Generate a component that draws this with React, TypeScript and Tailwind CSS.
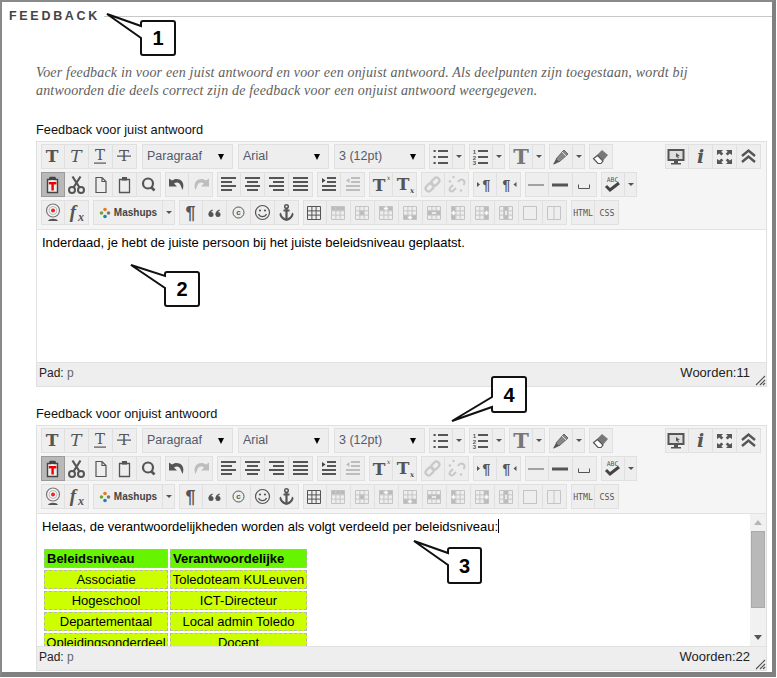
import React from "react";

const C = "#555";
const L = "#bdbdbd";

function Ico({ children }: { children: React.ReactNode }) {
  return (
    <svg width="24" height="25" viewBox="0 0 24 25" className="block shrink-0">
      {children}
    </svg>
  );
}

function SerifT({ x = 11, y = 18, s = 17, it = false, w = "700", c = C }: { x?: number; y?: number; s?: number; it?: boolean; w?: string; c?: string }) {
  return (
    <text x={x} y={y} textAnchor="middle" fontFamily="'DejaVu Serif', serif" fontWeight={w} fontStyle={it ? "italic" : "normal"} fontSize={s} fill={c}>
      T
    </text>
  );
}

const lines = (rows: [number, number][], sw = 2, c = C, start = 5) =>
  rows.map(([x1, x2], i) => <rect key={i} x={x1} y={start + i * 4} width={x2 - x1} height={sw} fill={c} />);

const TableIco = ({ fill = [], first = false, extra }: { fill?: number[]; first?: boolean; extra?: React.ReactNode }) => {
  const c = first ? "#555" : "#c4c4c4";
  const cells = [0, 1, 2, 3, 4, 5, 6, 7, 8];
  return (
    <Ico>
      {cells.map((i) =>
        fill.includes(i) ? <rect key={i} x={4 + (i % 3) * 4.5} y={6 + Math.floor(i / 3) * 4.5} width="4.5" height="4.5" fill="#bbb" /> : null
      )}
      <path d="M4.5 6.5h13v13h-13zM8.9 6.5v13M13.1 6.5v13M4.5 10.9h13M4.5 15.1h13" fill="none" stroke={c} strokeWidth="1" />
      {extra}
    </Ico>
  );
};

const plus = (x: number, y: number) => <path d={`M${x - 2} ${y}h4M${x} ${y - 2}v4`} stroke="#fff" strokeWidth="1.4" />;

const Icons: Record<string, React.ReactNode> = {
  bold: <Ico><SerifT /></Ico>,
  italic: <Ico><SerifT it w="400" /></Ico>,
  underline: <Ico><SerifT y={16} s={15} w="400" /><rect x="5" y="18.5" width="12" height="1.2" fill={C} /></Ico>,
  strike: <Ico><SerifT y={17} s={15} w="400" /><rect x="4" y="11.5" width="14" height="1.2" fill={C} /></Ico>,
  pasteWord: (
    <Ico>
      <path d="M6.5 7.5h3v-2h4v2h3v13h-10z" fill="#eee" stroke="#444" strokeWidth="1.4" />
      <rect x="8" y="5.5" width="7" height="2.5" fill="#444" />
      <rect x="7.8" y="10" width="7.6" height="2.4" fill="#e00" />
      <rect x="10.4" y="10" width="2.4" height="8.5" fill="#e00" />
    </Ico>
  ),
  cut: (
    <Ico>
      <circle cx="7" cy="18" r="3" fill="none" stroke={C} strokeWidth="2" />
      <circle cx="16" cy="18" r="3" fill="none" stroke={C} strokeWidth="2" />
      <path d="M8.5 15.5L15.5 4.5M14.5 15.5L7.5 4.5" stroke={C} strokeWidth="2.2" />
    </Ico>
  ),
  doc: <Ico><path d="M7 5.5h6l4 4v11H7z M13 5.5v4h4" fill="none" stroke={C} strokeWidth="1.2" /></Ico>,
  paste: (
    <Ico>
      <path d="M6.5 7.5h10v13h-10z" fill="none" stroke={C} strokeWidth="1.3" />
      <rect x="9" y="5" width="5" height="3.5" fill={C} />
    </Ico>
  ),
  search: (
    <Ico>
      <circle cx="11" cy="11.5" r="5" fill="none" stroke={C} strokeWidth="2.2" />
      <path d="M14 15l3.5 3.5" stroke={C} strokeWidth="2.6" />
    </Ico>
  ),
  undo: <Ico><path d="M4 6.5v8h8l-3-3c3-2 6-1 7 3l1.5 3.5c2-5 .5-9-3-10.500-3-1-5.500-.5-7.500 1z" fill={C} /></Ico>,
  redo: <Ico><path d="M20 6.500v8h-8l3-3c-3-2-6-1-7 3l-1.500 3.500c-2-5-.5-9 3-10.500 3-1 5.500-.5 7.500 1z" fill={L} /></Ico>,
  al: <Ico>{lines([[4, 19], [4, 15], [4, 19], [4, 15]])}</Ico>,
  ac: <Ico>{lines([[4, 19], [6, 17], [4, 19], [6, 17]])}</Ico>,
  ar: <Ico>{lines([[4, 19], [8, 19], [4, 19], [8, 19]])}</Ico>,
  aj: <Ico>{lines([[4, 19], [4, 19], [4, 19], [4, 19]])}</Ico>,
  indent: (
    <Ico>
      <path d="M5 6l3.500 2.500L5 11z" fill="#444" />
      {lines([[10, 19]], 2, C, 5)}
      <rect x="10" y="9" width="9" height="2" fill={C} />
      <rect x="5" y="13" width="14" height="2" fill={C} />
      <rect x="5" y="17" width="14" height="2" fill={C} />
    </Ico>
  ),
  outdent: (
    <Ico>
      <path d="M8.500 6L5 8.500 8.500 11z" fill={L} />
      <rect x="10" y="5" width="9" height="2" fill={L} />
      <rect x="10" y="9" width="9" height="2" fill={L} />
      <rect x="5" y="13" width="14" height="2" fill={L} />
      <rect x="5" y="17" width="14" height="2" fill={L} />
    </Ico>
  ),
  sup: (
    <Ico>
      <SerifT x={10} y={18.500} s={17} />
      <text x="19.500" y="8" textAnchor="middle" fontFamily="'DejaVu Serif', serif" fontStyle="italic" fontSize="6.500" fill={C}>x</text>
    </Ico>
  ),
  sub: (
    <Ico>
      <SerifT x={10} y={18} s={17} />
      <text x="19" y="21" textAnchor="middle" fontFamily="'DejaVu Serif', serif" fontStyle="italic" fontWeight="700" fontSize="7" fill={C}>x</text>
    </Ico>
  ),
  link: (
    <Ico>
      <g fill="none" stroke="#c8c8c8" strokeWidth="2.2" transform="rotate(-45 11.500 12.500)">
        <rect x="3" y="9.500" width="9" height="6" rx="3" />
        <rect x="11" y="9.500" width="9" height="6" rx="3" />
      </g>
    </Ico>
  ),
  unlink: (
    <Ico>
      <g fill="none" stroke="#c8c8c8" strokeWidth="2">
        <path d="M8 13l-3 3c-1.500 2 1 4.500 3 3l3-3" />
        <path d="M13 10c1-2 3-3 5-2 2 1 2 3 .5 5" />
        <path d="M4 9l2 1M8 4l1 2M15 18l2 1" />
      </g>
    </Ico>
  ),
  ltr: (
    <Ico>
      <path d="M4 10l3 2.500L4 15z" fill={C} />
      <text x="13.500" y="18" textAnchor="middle" fontFamily="'Liberation Sans', sans-serif" fontWeight="700" fontSize="14" fill={C}>¶</text>
    </Ico>
  ),
  rtl: (
    <Ico>
      <text x="9.500" y="18" textAnchor="middle" fontFamily="'Liberation Sans', sans-serif" fontWeight="700" fontSize="14" fill={C}>¶</text>
      <path d="M19.500 10L16.500 12.500l3 2.500z" fill={C} />
    </Ico>
  ),
  hr: <Ico><rect x="3" y="12.500" width="16" height="1" fill={C} /></Ico>,
  hrb: <Ico><rect x="3" y="11.500" width="16" height="3" fill={C} /></Ico>,
  nbsp: <Ico><path d="M5.500 12.500v4h11v-4" fill="none" stroke={C} strokeWidth="1" /></Ico>,
  spell: (
    <Ico>
      <text x="11.500" y="10" textAnchor="middle" fontFamily="'DejaVu Sans Mono', monospace" fontSize="6.500" fill={C}>ABC</text>
      <path d="M5 14l4 4 9-7" fill="none" stroke="#444" strokeWidth="3" />
    </Ico>
  ),
  ul: (
    <Ico>
      {[6, 12, 18].map((y) => <g key={y}><rect x="4.500" y={y} width="2.200" height="2" fill={C} /><rect x="9" y={y} width="10" height="2" fill={C} /></g>)}
    </Ico>
  ),
  ol: (
    <Ico>
      <text x="5.500" y="10" textAnchor="middle" fontFamily="'Liberation Sans', sans-serif" fontSize="6" fontWeight="700" fill={C}>1</text>
      <text x="5.500" y="15.500" textAnchor="middle" fontFamily="'Liberation Sans', sans-serif" fontSize="6" fontWeight="700" fill={C}>2</text>
      <text x="5.500" y="21" textAnchor="middle" fontFamily="'Liberation Sans', sans-serif" fontSize="6" fontWeight="700" fill={C}>3</text>
      {[6, 12, 18].map((y) => <rect key={y} x="9" y={y} width="10" height="2" fill={C} />)}
    </Ico>
  ),
  color: <Ico><SerifT s={21} y={20} x={12} c="#777" /></Ico>,
  pen: (
    <Ico>
      <path d="M7 15l8-9 4 4-9 8z" fill="#888" stroke="#666" strokeWidth="1" />
      <path d="M7 15l3 3-4 2-2 .5z" fill="#555" />
      <path d="M13 8l4 4" stroke="#ddd" strokeWidth="1" />
    </Ico>
  ),
  eraser: (
    <Ico>
      <path d="M4.500 14.500L13 6l6 5-7 8h-3z" fill="#777" />
      <path d="M4.500 14.500L9 19.500h3l2-2.500-5.500-5.500z" fill="#fff" stroke="#555" strokeWidth="1.200" />
    </Ico>
  ),
  monitor: (
    <Ico>
      <rect x="3.500" y="6" width="15" height="10" fill="#ddd" stroke={C} strokeWidth="2" />
      <path d="M11 9l4 3h-2l1 2-1 .5-1-2-1 1z" fill={C} />
      <path d="M9 17h4v2h3v1.500H6V19h3z" fill={C} />
    </Ico>
  ),
  info: (
    <Ico>
      <text x="11.500" y="19" textAnchor="middle" fontFamily="'DejaVu Serif', serif" fontWeight="700" fontStyle="italic" fontSize="19" fill={C}>i</text>
    </Ico>
  ),
  full: (
    <Ico>
      <path d="M4 6h6l-1.700 1.700 2 2-2 1.800-2-2L4 11zM19 6h-6l1.700 1.700-2 2 2 1.800 2-2 2.300 1.500zM4 20h6l-1.700-1.700 2-2-2-1.800-2 2L4 15zM19 20h-6l1.700-1.700-2-2 2-1.800 2 2 2.300-1.500z" fill={C} />
    </Ico>
  ),
  collapse: <Ico><path d="M5 12l6.500-5.500L18 12M5 18l6.500-5.500L18 18" fill="none" stroke={C} strokeWidth="2.400" /></Ico>,
  target: (
    <Ico>
      <circle cx="12" cy="10.500" r="6.500" fill="#f4f4f4" stroke="#777" strokeWidth="1.200" />
      <circle cx="12" cy="10.500" r="4" fill="none" stroke="#bbb" strokeWidth="1" />
      <circle cx="12" cy="10.500" r="2" fill="#e22" />
      <path d="M7 21c1-3 9-3 10 0z" fill="#555" />
    </Ico>
  ),
  fx: (
    <Ico>
      <text x="8" y="18" textAnchor="middle" fontFamily="'Liberation Serif', serif" fontStyle="italic" fontWeight="700" fontSize="19" fill={C}>f</text>
      <text x="16" y="21" textAnchor="middle" fontFamily="'Liberation Serif', serif" fontStyle="italic" fontWeight="700" fontSize="12" fill={C}>x</text>
    </Ico>
  ),
  para: <Ico><text x="11.500" y="19" textAnchor="middle" fontFamily="'Liberation Sans', sans-serif" fontWeight="700" fontSize="18" fill={C}>¶</text></Ico>,
  quote: (
    <Ico>
      <g fill={C}>
        <circle cx="8" cy="14.500" r="2.500" />
        <path d="M5.500 14.500c0-2.500 1.500-4.500 4-5l.5 1c-1.500.5-2.500 2-2.500 4z" />
        <circle cx="15" cy="14.500" r="2.500" />
        <path d="M12.500 14.500c0-2.500 1.500-4.500 4-5l.5 1c-1.500.5-2.500 2-2.500 4z" />
      </g>
    </Ico>
  ),
  copy: <Ico><circle cx="11.500" cy="12.500" r="5.500" fill="none" stroke={C} strokeWidth="1" /><text x="11.500" y="15" textAnchor="middle" fontFamily="'Liberation Sans', sans-serif" fontSize="8" fontWeight="700" fill={C}>c</text></Ico>,
  smile: (
    <Ico>
      <circle cx="11.500" cy="12.500" r="7" fill="none" stroke={C} strokeWidth="1.200" />
      <circle cx="9" cy="10.500" r="1.100" fill={C} />
      <circle cx="14" cy="10.500" r="1.100" fill={C} />
      <path d="M7.500 14c1.500 3.500 6.500 3.500 8 0" fill="none" stroke={C} strokeWidth="1.200" />
    </Ico>
  ),
  anchor: (
    <Ico>
      <circle cx="11.500" cy="6.500" r="1.800" fill="none" stroke={C} strokeWidth="1.500" />
      <path d="M11.500 8v11M8.500 10.500h6" stroke={C} strokeWidth="2.200" />
      <path d="M4.500 14l1-1.500 1 1.500c0 2 3 4 5 5 2-1 5-3 5-5l1-1.500 1 1.500c0 3-3 6-7 7-4-1-7-4-7-7z" fill={C} />
    </Ico>
  ),
  t0: <TableIco first />,
  t1: <TableIco fill={[0, 1, 2]} />,
  t2: <TableIco fill={[4]} />,
  t3: <TableIco fill={[0, 1, 2]} extra={plus(11, 8.500)} />,
  t4: <TableIco fill={[6, 7, 8]} extra={plus(11, 17.500)} />,
  t5: <TableIco fill={[3, 4, 5]} extra={<path d="M9 13h4" stroke="#fff" strokeWidth="1.400" />} />,
  t6: <TableIco fill={[0, 3, 6]} extra={plus(6.500, 13)} />,
  t7: <TableIco fill={[2, 5, 8]} extra={plus(15.500, 13)} />,
  t8: <TableIco fill={[1, 4, 7]} extra={<path d="M11 11v4" stroke="#fff" strokeWidth="1.400" />} />,
  t9: <Ico><rect x="4.500" y="6.500" width="13" height="13" fill="none" stroke="#c4c4c4" /></Ico>,
  t10: <Ico><path d="M4.500 6.500h13v13h-13zM11 6.500v13" fill="none" stroke="#c4c4c4" /></Ico>,
  html: <Ico><text x="12" y="16" textAnchor="middle" fontFamily="'DejaVu Sans Mono', monospace" fontSize="8.200" fill={C}>HTML</text></Ico>,
  css: <Ico><text x="12" y="16" textAnchor="middle" fontFamily="'DejaVu Sans Mono', monospace" fontSize="8.200" fill={C}>CSS</text></Ico>,
};

function Group({ items, active }: { items: string[]; active?: string }) {
  return (
    <div className="flex">
      {items.map((k, i) => (
        <div
          key={k}
          className={`w-[24px] h-[25px] border-y border-r ${i === 0 ? "border-l" : ""} ${
            k === active ? "bg-[#b9b9b9] border-[#9a9a9a]" : "bg-[#eeeeee] border-[#e0e0e0]"
          } flex items-center justify-center overflow-hidden`}
        >
          {Icons[k]}
        </div>
      ))}
    </div>
  );
}

function Split({ icon, first = 24 }: { icon: React.ReactNode; first?: number }) {
  return (
    <div className="flex">
      <div className={`${first === 24 ? "w-[24px]" : "w-[70px]"} h-[25px] border border-[#e0e0e0] bg-[#eeeeee] flex items-center justify-center overflow-hidden`}>
        {icon}
      </div>
      <div className="w-[12px] h-[25px] border-y border-r border-[#e0e0e0] bg-[#eeeeee] flex items-center justify-center">
        <span className="block w-0 h-0 border-x-[3px] border-x-transparent border-t-[3px] border-t-[#555]" />
      </div>
    </div>
  );
}

function Select({ label }: { label: string }) {
  return (
    <div className="ml-px w-[91px] h-[25px] border border-[#e0e0e0] bg-[#eeeeee] flex items-center justify-between pl-[4px] pr-[8px] text-[12.5px] text-[#555a68]">
      <span>{label}</span>
      <span className="block w-0 h-0 border-x-[3.5px] border-x-transparent border-t-[6px] border-t-black" />
    </div>
  );
}

function Toolbar() {
  return (
    <div className="h-[88px] bg-[#f5f5f5] border-b border-[#e2e2e2] pt-[2px] pl-[4px] pr-[5px] flex flex-col gap-[3px]">
      <div className="flex gap-[4px]">
        <Group items={["bold", "italic", "underline", "strike"]} />
        <Select label="Paragraaf" />
        <Select label="Arial" />
        <Select label="3 (12pt)" />
        <Split icon={Icons.ul} />
        <Split icon={Icons.ol} />
        <Split icon={Icons.color} />
        <Split icon={Icons.pen} />
        <Group items={["eraser"]} />
        <div className="ml-auto">
          <Group items={["monitor", "info", "full", "collapse"]} />
        </div>
      </div>
      <div className="flex gap-[4px]">
        <Group items={["pasteWord", "cut", "doc", "paste", "search"]} active="pasteWord" />
        <Group items={["undo", "redo"]} />
        <Group items={["al", "ac", "ar", "aj"]} />
        <Group items={["indent", "outdent"]} />
        <Group items={["sup", "sub"]} />
        <Group items={["link", "unlink"]} />
        <Group items={["ltr", "rtl"]} />
        <Group items={["hr", "hrb", "nbsp"]} />
        <Split icon={Icons.spell} />
      </div>
      <div className="flex gap-[4px]">
        <Group items={["target", "fx"]} />
        <Split
          first={70}
          icon={
            <div className="flex items-center gap-[3px] text-[10px] font-bold text-[#444]">
              <svg width="12" height="12" viewBox="0 0 12 12" className="block">
                <circle cx="6" cy="2.500" r="1.800" fill="#e67a1e" />
                <circle cx="2.500" cy="6" r="1.800" fill="#6aa82d" />
                <circle cx="9.500" cy="6" r="1.800" fill="#777" />
                <circle cx="6" cy="9.500" r="1.800" fill="#1f7fb5" />
              </svg>
              <span>Mashups</span>
            </div>
          }
        />
        <Group items={["para", "quote", "copy", "smile", "anchor"]} />
        <Group items={["t0", "t1", "t2", "t3", "t4", "t5", "t6", "t7", "t8", "t9", "t10"]} />
        <Group items={["html", "css"]} />
      </div>
    </div>
  );
}

function Status({ words }: { words: number }) {
  return (
    <div className="relative h-[24px] bg-[#eeeeee] border-t border-[#e2e2e2] flex items-center justify-between pl-[2px] pr-[16px] pb-[3px] text-[#222]">
      <span className="text-[12px]">
        Pad: <span className="text-[#666]">p</span>
      </span>
      <span className="text-[13px]">Woorden:{words}</span>
      <svg width="12" height="12" viewBox="0 0 12 12" className="absolute right-0 bottom-0 block">
        <path d="M11 2L2 11M11 6L6 11M11 9L9 11" stroke="#555" strokeWidth="1.200" />
      </svg>
    </div>
  );
}

const cellH = "border border-dashed border-[#b5b5b5] bg-[#66f400] h-[19px] px-[2px] py-0 text-left font-bold leading-[16px]";
const cell = "border border-dashed border-[#b5b5b5] bg-[#ccff00] h-[19px] p-0 text-center font-normal leading-[16px]";

function Editor({ second }: { second?: boolean }) {
  return (
    <div className="h-[246px] border border-[#e0e0e0] flex flex-col">
      <Toolbar />
      <div className="h-[132px] flex overflow-hidden bg-white">
        {second ? (
          <>
            <div className="flex-1 min-w-0 pt-[4px] pl-[5px] text-[13px] leading-[17px] text-black">
              <p>
                Helaas, de verantwoordelijkheden worden als volgt verdeeld per beleidsniveau:
                <span className="inline-block w-px h-[14px] bg-black align-[-2px]" />
              </p>
              <table className="mt-[12px] border-separate border-spacing-[2px] table-fixed w-[267px]">
                <colgroup>
                  <col className="w-[124px]" />
                  <col className="w-[137px]" />
                </colgroup>
                <tbody>
                  <tr><th className={cellH}>Beleidsniveau</th><th className={cellH}>Verantwoordelijke</th></tr>
                  <tr><td className={cell}>Associatie</td><td className={cell}>Toledoteam KULeuven</td></tr>
                  <tr><td className={cell}>Hogeschool</td><td className={cell}>ICT-Directeur</td></tr>
                  <tr><td className={cell}>Departementaal</td><td className={cell}>Local admin Toledo</td></tr>
                  <tr><td className={cell}>Opleidingsonderdeel</td><td className={cell}>Docent</td></tr>
                </tbody>
              </table>
            </div>
            <div className="w-[16px] shrink-0 bg-[#f1f1f1] flex flex-col items-center pt-[6px] pb-[6px]">
              <span className="block w-0 h-0 border-x-[4px] border-x-transparent border-b-[5px] border-b-[#b5b5b5]" />
              <div className="w-[14px] h-[77px] bg-[#b9b9b9] mt-[6px] mb-auto border border-[#aaa]" />
              <span className="block w-0 h-0 border-x-[4px] border-x-transparent border-t-[5px] border-t-[#555]" />
            </div>
          </>
        ) : (
          <p className="pt-[4px] pl-[5px] text-[13px] leading-[17px] text-black">
            Inderdaad, je hebt de juiste persoon bij het juiste beleidsniveau geplaatst.
          </p>
        )}
      </div>
      <Status words={second ? 22 : 11} />
    </div>
  );
}

function calloutPath(w: number, h: number, tx: number, ty: number, a1: number, a2: number) {
  const r = 2;
  return `M${tx} ${ty}L0 ${a1}V${r}Q0 0 ${r} 0H${w - r}Q${w} 0 ${w} ${r}V${h - r}Q${w} ${h} ${w - r} ${h}H${r}Q0 ${h} 0 ${h - r}V${a2}Z`;
}

function Callout({ n, className, w, h, tx, ty, a1, a2 }: { n: number; className: string; w: number; h: number; tx: number; ty: number; a1: number; a2: number }) {
  return (
    <div className={`absolute flex items-center justify-center ${className}`}>
      <svg width={w} height={h} className="absolute left-0 top-0 overflow-visible">
        <path d={calloutPath(w, h, tx, ty, a1, a2)} fill="#fff" stroke="#111" strokeWidth="2" strokeLinejoin="miter" />
      </svg>
      <span className="relative text-[20px] font-bold text-black leading-none">{n}</span>
    </div>
  );
}

export default function App() {
  return (
    <div className="relative w-[777px] h-[678px] overflow-hidden bg-white font-['Liberation_Sans',Arial,sans-serif]">
      <div className="h-[677px] w-[776px] border-l-2 border-t-2 border-r-[4px] border-b-[5px] border-t-[#8a8a8a] border-l-[#8a8a8a] border-r-[#808080] border-b-[#808080]">
        <div className="flex items-center h-[28px] pl-[7px] gap-[4px]">
          <h2 className="text-[12.5px] font-bold tracking-[2.7px] text-[#444] leading-none">FEEDBACK</h2>
          <div className="flex-1 h-px bg-[#c8c8c8]" />
        </div>
        <p className="ml-[34px] mt-[34px] w-[720px] text-[14px] leading-[18px] italic text-[#5e5e5e] font-['Liberation_Serif',serif] tracking-[0.18px]">
          Voer feedback in voor een juist antwoord en voor een onjuist antwoord. Als deelpunten zijn toegestaan, wordt bij antwoorden die deels correct zijn de feedback voor een onjuist antwoord weergegeven.
        </p>
        <div className="ml-[34px] w-[731px]">
          <div className="mt-[22px] h-[16px] text-[12.8px] leading-[16px] text-[#111]">Feedback voor juist antwoord</div>
          <div className="mt-[3px]"><Editor /></div>
          <div className="mt-[19px] h-[16px] text-[12.8px] leading-[16px] text-[#111]">Feedback voor onjuist antwoord</div>
          <div className="mt-[3px]"><Editor second /></div>
        </div>
      </div>
      <Callout n={1} className="left-[141px] top-[21px] w-[34px] h-[34px]" w={34} h={34} tx={-34} ty={-7} a1={5} a2={17} />
      <Callout n={2} className="left-[165px] top-[272px] w-[34px] h-[34px]" w={34} h={34} tx={-34} ty={-7} a1={4} a2={16} />
      <Callout n={3} className="left-[448px] top-[548px] w-[33px] h-[35px]" w={33} h={35} tx={-34} ty={-7} a1={5} a2={17} />
      <Callout n={4} className="left-[492px] top-[377px] w-[34px] h-[35px]" w={34} h={35} tx={-40} ty={44} a1={20} a2={30} />
    </div>
  );
}
